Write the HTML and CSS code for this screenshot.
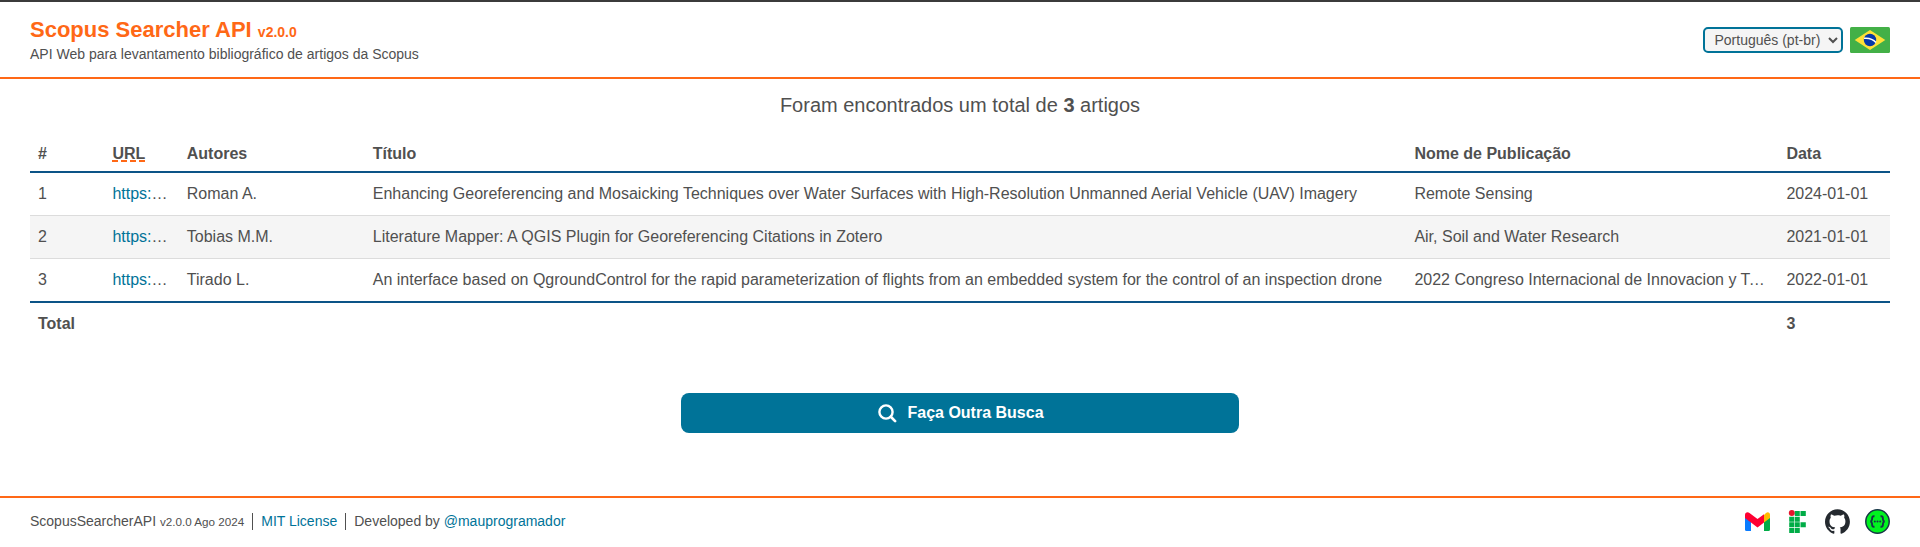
FILE: index.html
```html
<!DOCTYPE html>
<html lang="pt-br">
<head>
<meta charset="utf-8">
<title>Scopus Searcher API</title>
<link rel="stylesheet" href="styles.css">
</head>
<body>
<header class="header">
  <div>
    <h1 class="title">Scopus Searcher API <small class="version">v2.0.0</small></h1>
    <p class="subtitle">API Web para levantamento bibliográfico de artigos da Scopus</p>
  </div>
  <div class="language">
    <select class="select" aria-label="Idioma"><option>Português (pt-br)</option></select>
    <svg class="flag" viewBox="0 0 40 26">
      <rect width="40" height="26" rx="1.500" fill="#43b047"/>
      <path d="M4.700 13 20 3l15.300 10L20 23z" fill="#fee137"/>
      <circle cx="20" cy="13" r="6.200" fill="#0738a8"/>
      <path d="M14 11.300c4.500-.6 9 .9 12 4.200" fill="none" stroke="#fff" stroke-width="1.500"/>
    </svg>
  </div>
</header>
<main class="main">
  <p class="summary">Foram encontrados um total de <strong>3</strong> artigos</p>
  <table class="table">
    <colgroup><col class="col-index"><col class="col-url"><col class="col-authors"><col class="col-title"><col class="col-publication"><col class="col-date"></colgroup>
    <thead><tr><th>#</th><th><span class="hint">URL</span></th><th>Autores</th><th>Título</th><th>Nome de Publicação</th><th>Data</th></tr></thead>
    <tbody>
      <tr><td>1</td><td><a class="link">https:</a>…</td><td>Roman A.</td><td>Enhancing Georeferencing and Mosaicking Techniques over Water Surfaces with High-Resolution Unmanned Aerial Vehicle (UAV) Imagery</td><td>Remote Sensing</td><td>2024-01-01</td></tr>
      <tr><td>2</td><td><a class="link">https:</a>…</td><td>Tobias M.M.</td><td>Literature Mapper: A QGIS Plugin for Georeferencing Citations in Zotero</td><td>Air, Soil and Water Research</td><td>2021-01-01</td></tr>
      <tr><td>3</td><td><a class="link">https:</a>…</td><td>Tirado L.</td><td>An interface based on QgroundControl for the rapid parameterization of flights from an embedded system for the control of an inspection drone</td><td>2022 Congreso Internacional de Innovacion y T<span class="more">…</span></td><td>2022-01-01</td></tr>
    </tbody>
    <tfoot><tr><th colspan="5">Total</th><th>3</th></tr></tfoot>
  </table>
  <button class="button">
    <svg class="search" viewBox="0 0 19 19" fill="none" stroke="#fff"><circle cx="8" cy="8" r="6.600" stroke-width="2.400"/><path d="m12.800 12.800 4.300 4.300" stroke-width="2.700" stroke-linecap="round"/></svg>
    Faça Outra Busca
  </button>
</main>
<footer class="footer">
  <div class="credits">
    <span class="credit">ScopusSearcherAPI <small class="release">v2.0.0 Ago 2024</small></span>
    <span class="credit"><a class="link">MIT License</a></span>
    <span class="credit">Developed by <a class="link">@mauprogramador</a></span>
  </div>
  <div class="icons">
    <svg class="icon" viewBox="0 0 25 25"><path d="M0 6v14.500A1.500 1.500 0 0 0 1.500 22H6V11z" fill="#0a7cff"/><path d="M19 11v11h4.500a1.500 1.500 0 0 0 1.500-1.500V6z" fill="#00ac47"/><path d="m19 6 2-2c2-1.500 4-.3 4 2v3l-6 4.500z" fill="#ffba00"/><path d="M0 6c0-2.500 2.500-3.500 4.500-2l8 6L19 5.200v8.300L12.500 18.500 6 13.500 0 9z" fill="#fe0032"/></svg>
    <svg class="icon" viewBox="0 0 25 25" fill="#00ac47"><circle cx="6.800" cy="4" r="3" fill="#e5142c"/><path d="M9.800 2h5v5h-5zM15.500 2h5.300v5h-5.300zM4.200 7.700h5v5h-5zM9.800 7.700h5v5h-5zM4.200 13.300h5v5h-5zM9.800 13.300h5v5h-5zM15.500 13.300h5.300v5h-5.300zM4.200 19h5v5h-5zM9.800 19h5v5h-5z"/></svg>
    <svg class="icon" viewBox="0 0 98 96" fill="#24292f"><path fill-rule="evenodd" d="M48.854 0C21.839 0 0 22 0 49.217c0 21.756 13.993 40.172 33.405 46.690 2.427.490 3.316-1.059 3.316-2.362 0-1.141-.080-5.052-.080-9.127-13.590 2.934-16.420-5.867-16.420-5.867-2.184-5.704-5.420-7.170-5.420-7.170-4.448-3.015.324-3.015.324-3.015 4.934.326 7.523 5.052 7.523 5.052 4.367 7.496 11.404 5.378 14.235 4.074.404-3.178 1.699-5.378 3.074-6.600-10.839-1.141-22.243-5.378-22.243-24.283 0-5.378 1.940-9.778 5.014-13.200-.485-1.222-2.184-6.275.486-13.038 0 0 4.125-1.304 13.426 5.052a46.970 46.970 0 0 1 12.214-1.630c4.125 0 8.330.571 12.213 1.630 9.302-6.356 13.427-5.052 13.427-5.052 2.670 6.763.970 11.816.485 13.038 3.155 3.422 5.015 7.822 5.015 13.200 0 18.905-11.404 23.060-22.324 24.283 1.780 1.548 3.316 4.481 3.316 9.126 0 6.600-.080 11.897-.080 13.526 0 1.304.890 2.853 3.316 2.364 19.412-6.520 33.405-24.935 33.405-46.691C97.707 22 75.788 0 48.854 0z"/></svg>
    <svg class="icon" viewBox="0 0 25 25"><circle cx="12.500" cy="12.500" r="11.700" fill="#00f31f" stroke="#173647" stroke-width="1.500"/><path d="M9.500 7.300c-3-.3-2.200 1.600-2.500 3.400q-.2 1.800-1.800 1.800 1.600 0 1.800 1.800c.3 1.800-.5 3.700 2.500 3.400M15.500 7.300c3-.3 2.200 1.600 2.500 3.400q.2 1.800 1.800 1.800-1.600 0-1.800 1.800c-.3 1.800.5 3.700-2.500 3.400" fill="none" stroke="#173647" stroke-width="1.900"/><g fill="#173647"><circle cx="9.800" cy="12.500" r="1"/><circle cx="12.500" cy="12.500" r="1"/><circle cx="15.200" cy="12.500" r="1"/></g></svg>
  </div>
</footer>
</body>
</html>
```
FILE: styles.css
```css
* { box-sizing: border-box; }
body {
  margin: 0;
  height: 547px;
  display: flex;
  flex-direction: column;
  overflow: hidden;
  border-top: 2px solid #3b3b3b;
  background: #fff;
  color: #505050;
  font: 16px/20px "Liberation Sans", Arial, sans-serif;
}
.header {
  height: 77px;
  padding: 0 30px;
  display: flex;
  align-items: center;
  justify-content: space-between;
  border-bottom: 2px solid #ff6816;
}
.title { margin: 0; padding-top: 2px; color: #ff6816; font-size: 22px; line-height: 26px; }
.version { font-size: 14px; }
.subtitle { margin: 0; padding-bottom: 2px; font-size: 14px; line-height: 18px; }
.language { display: flex; align-items: center; gap: 7px; }
.select {
  width: 140px;
  height: 26px;
  padding: 0 0 0 5.5px;
  border: 2px solid #007398;
  border-radius: 5px;
  background: #f5f5f5;
  color: #505050;
  font: 14px "Liberation Sans", Arial, sans-serif;
}
.flag { width: 40px; height: 26px; }
.main { flex: 1; padding: 14px 30px 0; }
.summary { margin: 0 0 24px; text-align: center; font-size: 20px; line-height: 24px; }
.table { width: 100%; table-layout: fixed; border-collapse: separate; border-spacing: 0; }
.col-index, .col-url { width: 4%; }
.col-authors { width: 10%; }
.col-title { width: 56%; }
.col-publication { width: 20%; }
.col-date { width: 6%; }
.table th, .table td {
  height: 43px;
  padding: 0 8px;
  text-align: left;
  white-space: nowrap;
}
.table thead th { height: 32px; padding-bottom: 4px; border-bottom: 2px solid #0c5487; }
.table tfoot th { padding-bottom: 2px; }
.table td { border-bottom: 1px solid #dcdcdc; }
.table tbody tr:nth-child(even) { background: #f5f5f5; }
.table tbody tr:last-child td { height: 44px; border-bottom: 2px solid #0c5487; }
.hint { text-decoration: underline dashed #ff6816 2px; text-underline-offset: 1px; text-decoration-skip-ink: none; }
.more { margin-left: -1.5px; }
.link { color: #007398; }
.button {
  width: 558px;
  height: 40px;
  margin: 47px auto 0;
  padding: 0 0 0 8px;
  display: flex;
  align-items: center;
  justify-content: center;
  gap: 10px;
  border: 0;
  border-radius: 8px;
  background: #007398;
  color: #fff;
  font: bold 16px "Liberation Sans", Arial, sans-serif;
}
.button { padding-left: 2px; padding-right: 0; }
.search { width: 19px; height: 19px; }
.footer {
  height: 51px;
  padding: 0 30px 2px;
  display: flex;
  align-items: center;
  justify-content: space-between;
  border-top: 2px solid #ff6816;
}
.credits { display: flex; font-size: 14px; line-height: 16px; }
.credit + .credit { margin-left: 8px; padding-left: 8px; border-left: 1px solid #505050; }
.release { font-size: 11.67px; }
.icons { display: flex; gap: 15px; }
.icon { width: 25px; height: 25px; }
```
